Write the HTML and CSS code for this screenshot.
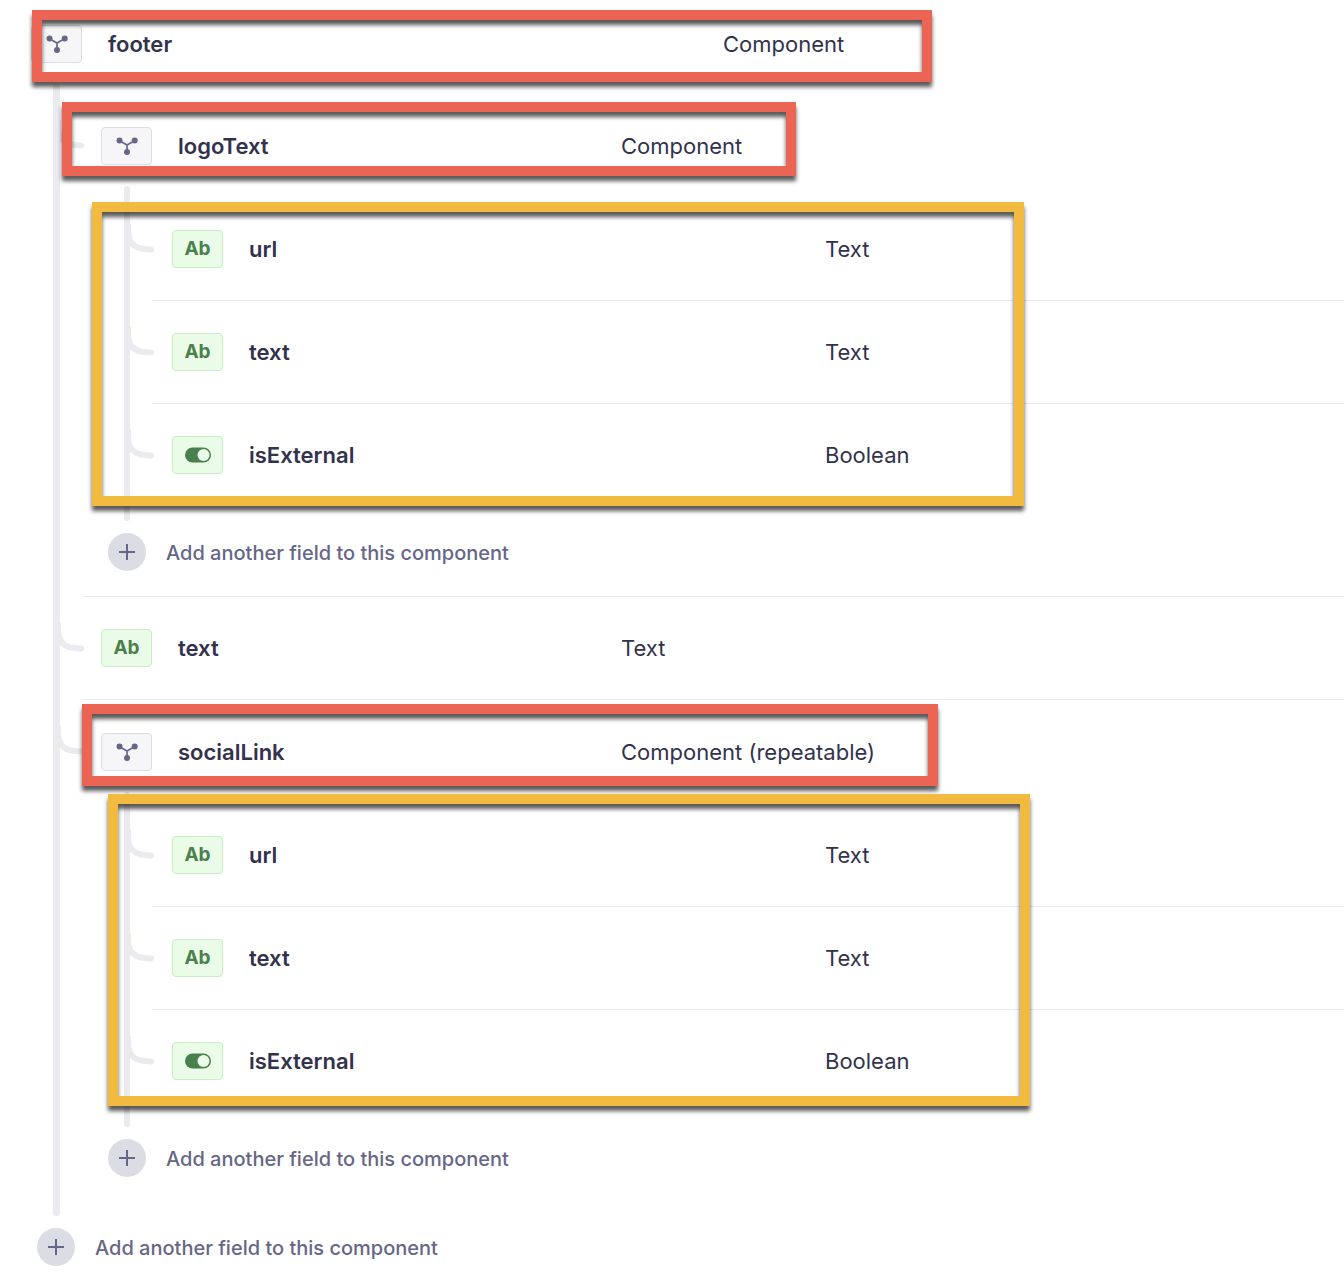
FILE: index.html
```html
<!DOCTYPE html>
<html lang="en">
<head>
<meta charset="utf-8">
<meta name="viewport" content="width=device-width, initial-scale=1">
<title>footer component</title>
<link rel="stylesheet" href="styles.css">
</head>
<body>
<svg class="defs" aria-hidden="true">
  <symbol id="component" viewBox="0 0 22 18">
    <path d="M3 3.500L11 8L19 3.500M11 8V15" fill="none" stroke="currentColor" stroke-width="1.700"/>
    <circle cx="3.500" cy="3.500" r="3" fill="currentColor"/>
    <circle cx="18.700" cy="3.500" r="3" fill="currentColor"/>
    <circle cx="11" cy="15" r="3" fill="currentColor"/>
  </symbol>
  <symbol id="toggle" viewBox="0 0 26 16">
    <rect y="0.500" width="26" height="15" rx="7.500" fill="currentColor"/>
    <circle cx="18.500" cy="8" r="6" fill="#eafbe7"/>
  </symbol>
  <symbol id="plus" viewBox="0 0 16 16">
    <path d="M8 0V16M0 8H16" fill="none" stroke="currentColor" stroke-width="2"/>
  </symbol>
  <symbol id="branch" viewBox="0 0 28 32">
    <path d="M-2 0V6C-2 20 5 25.500 21 25.500" fill="none" stroke="#eaeaef" stroke-width="6" stroke-linecap="round"/>
  </symbol>
</svg>
<main class="tree">
  <div class="head root">
    <span class="badge neutral"><svg class="icon-component"><use href="#component"/></svg></span>
    <span class="name">footer</span><span class="type">Component</span>
  </div>
  <div class="group outer">
    <span class="trunk"></span>
    <ul class="items">
      <li class="item">
        <svg class="branch"><use href="#branch"/></svg>
        <div class="body">
          <div class="head nested">
            <span class="badge neutral"><svg class="icon-component"><use href="#component"/></svg></span>
            <span class="name">logoText</span><span class="type">Component</span>
          </div>
          <div class="group">
            <span class="trunk"></span>
            <ul class="items">
              <li class="item"><svg class="branch"><use href="#branch"/></svg>
                <div class="body field deep"><span class="badge">Ab</span><span class="name">url</span><span class="type">Text</span></div></li>
              <li class="item"><svg class="branch"><use href="#branch"/></svg>
                <div class="body field deep"><span class="badge">Ab</span><span class="name">text</span><span class="type">Text</span></div></li>
              <li class="item"><svg class="branch"><use href="#branch"/></svg>
                <div class="body field deep"><span class="badge"><svg class="icon-toggle"><use href="#toggle"/></svg></span><span class="name">isExternal</span><span class="type">Boolean</span></div></li>
            </ul>
          </div>
          <button class="add" type="button"><span class="circle"><svg class="icon-plus"><use href="#plus"/></svg></span>Add another field to this component</button>
        </div>
      </li>
      <li class="item"><svg class="branch"><use href="#branch"/></svg>
        <div class="body field"><span class="badge">Ab</span><span class="name">text</span><span class="type">Text</span></div></li>
      <li class="item">
        <svg class="branch"><use href="#branch"/></svg>
        <div class="body">
          <div class="head nested">
            <span class="badge neutral"><svg class="icon-component"><use href="#component"/></svg></span>
            <span class="name">socialLink</span><span class="type">Component (repeatable)</span>
          </div>
          <div class="group">
            <span class="trunk"></span>
            <ul class="items">
              <li class="item"><svg class="branch"><use href="#branch"/></svg>
                <div class="body field deep"><span class="badge">Ab</span><span class="name">url</span><span class="type">Text</span></div></li>
              <li class="item"><svg class="branch"><use href="#branch"/></svg>
                <div class="body field deep"><span class="badge">Ab</span><span class="name">text</span><span class="type">Text</span></div></li>
              <li class="item"><svg class="branch"><use href="#branch"/></svg>
                <div class="body field deep"><span class="badge"><svg class="icon-toggle"><use href="#toggle"/></svg></span><span class="name">isExternal</span><span class="type">Boolean</span></div></li>
            </ul>
          </div>
          <button class="add" type="button"><span class="circle"><svg class="icon-plus"><use href="#plus"/></svg></span>Add another field to this component</button>
        </div>
      </li>
    </ul>
  </div>
  <button class="add last" type="button"><span class="circle"><svg class="icon-plus"><use href="#plus"/></svg></span>Add another field to this component</button>

  <span class="mark red mark-footer"></span>
  <span class="mark red mark-logo"></span>
  <span class="mark yellow mark-logo-fields"></span>
  <span class="mark red mark-social"></span>
  <span class="mark yellow mark-social-fields"></span>
</main>
</body>
</html>
```
FILE: styles.css
```css
* { box-sizing: border-box; }

body {
  margin: 0;
  background: #fff;
  color: #32324d;
  font-family: Inter, "Liberation Sans", sans-serif;
  font-size: 22px;
  line-height: 28px;
}

.defs { position: absolute; width: 0; height: 0; }
.tree { position: relative; padding: 4px 0 14px 12px; overflow: hidden; }
.items { flex: 1; margin: 0; padding: 12px 0 15px; list-style: none; }

/* Rows */
.head, .field {
  display: grid;
  grid-template-columns: 51px 417fr 723fr;
  align-items: center;
  column-gap: 26px;
  padding-left: 19px;
}
.head { height: 80px; }
.field { height: 102px; }
.root { grid-template-columns: 51px 589fr 621fr; }
.deep { grid-template-columns: 51px 550fr 519fr; padding-left: 20px; }
.nested { margin-top: 12px; }
.name { font-weight: 600; }

.item { display: flex; }
.body { flex: 1; }
.item:not(:last-child) > .body { border-bottom: 1px solid #eaeaef; }
.item:not(:last-child) > .field { height: 103px; }

/* Connecting lines */
.group { display: flex; padding-left: 42px; }
.trunk { width: 6px; border-radius: 3px; background: #eaeaef; }
.branch { flex: none; width: 28px; height: 32px; margin: 26px -6px 0 0; }
.outer { padding-left: 41px; }
.outer > .trunk { width: 7px; }
.outer > .items { padding: 10px 0 14px; }

/* Type badges */
.badge {
  display: flex;
  align-items: center;
  justify-content: center;
  height: 38px;
  border: 1px solid #c6f0c2;
  border-radius: 4px;
  background: #eafbe7;
  color: #4a804d;
  font-size: 19px;
  font-weight: 700;
}
.neutral { border-color: #dcdce4; background: #f6f6f9; color: #666687; }
.icon-component { width: 22px; height: 18px; }
.icon-toggle { width: 26px; height: 16px; }
.icon-plus { width: 16px; height: 16px; }

.add {
  display: flex;
  align-items: flex-end;
  gap: 20px;
  margin: 12px 0 25px 26px;
  padding: 0;
  border: 0;
  background: none;
  color: #666687;
  font: 500 20px/36px Inter, "Liberation Sans", sans-serif;
  cursor: pointer;
}
.last { margin: 12px 0 0 25px; }
.circle {
  display: flex;
  align-items: center;
  justify-content: center;
  width: 38px;
  height: 38px;
  border-radius: 50%;
  background: #dcdce4;
}

/* Highlight frames drawn over the tree */
.mark {
  position: absolute;
  border: 10px solid;
  filter: drop-shadow(0 5px 2px rgba(0, 0, 0, 0.65));
  pointer-events: none;
}
.red { border-color: #ec6453; }
.yellow { border-color: #f2bb40; }
.mark-footer { left: 32px; top: 10px; width: 900px; height: 72px; }
.mark-logo { left: 62px; top: 102px; width: 734px; height: 74px; }
.mark-logo-fields { left: 92px; top: 202px; width: 932px; height: 304px; }
.mark-social { left: 82px; top: 704px; width: 856px; height: 82px; }
.mark-social-fields { left: 108px; top: 794px; width: 922px; height: 312px; }
```
